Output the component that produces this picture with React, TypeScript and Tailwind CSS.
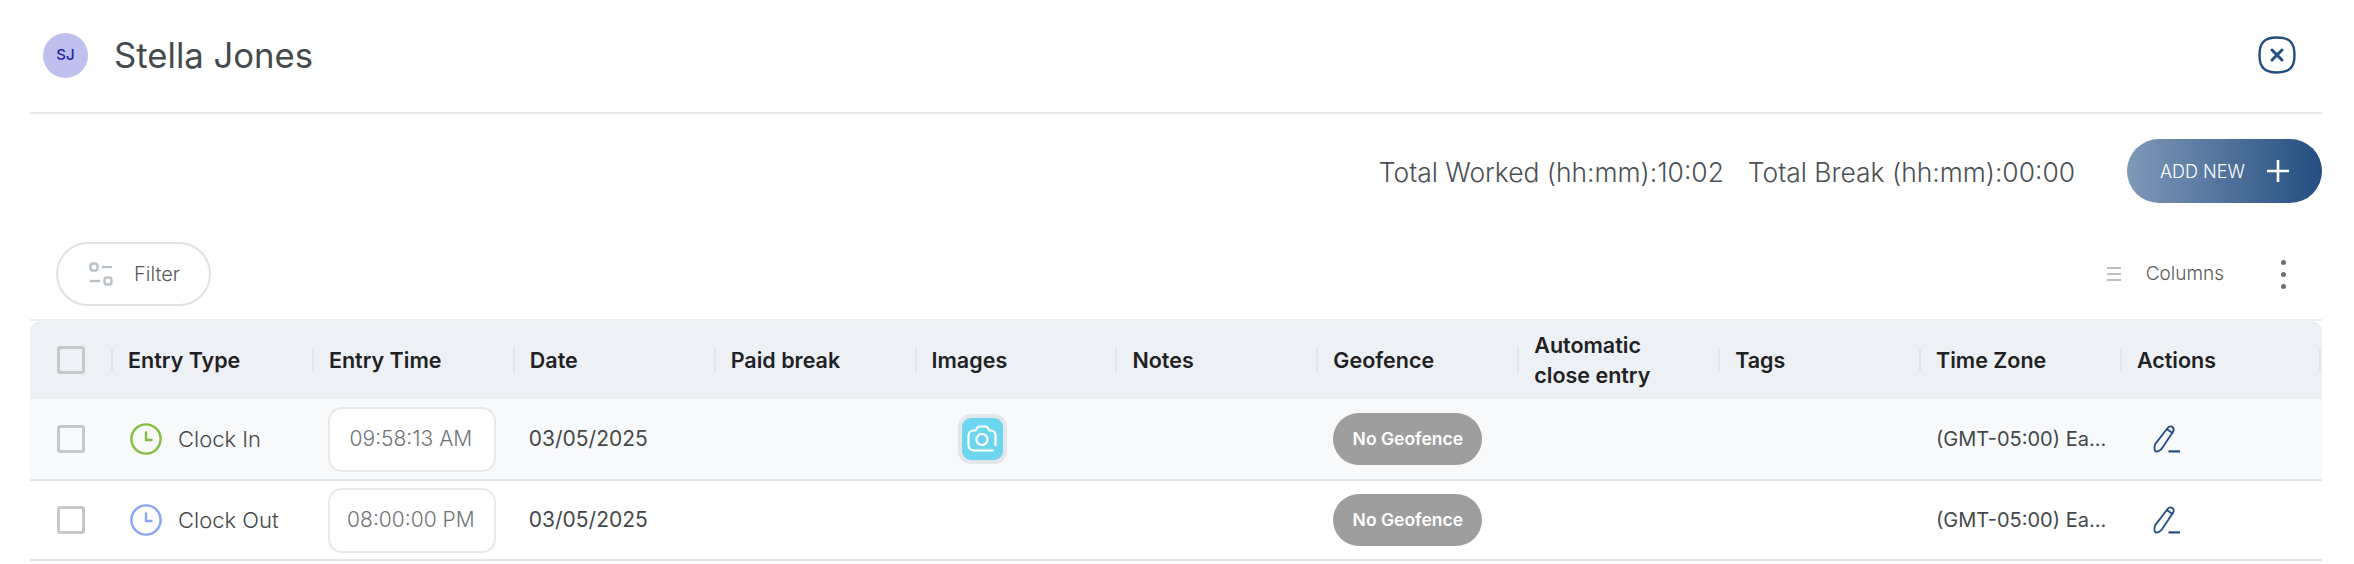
const columns = ["Entry Type", "Entry Time", "Date", "Paid break", "Images", "Notes", "Geofence", "Automatic close entry", "Tags", "Time Zone", "Actions"];

const rows = [
  { type: "Clock In", color: "#82bf3f", time: "09:58:13 AM", hasImage: true, bg: "bg-[#f8f9fb]", height: "h-[82px]" },
  { type: "Clock Out", color: "#8ba4f9", time: "08:00:00 PM", hasImage: false, bg: "bg-white", height: "h-[80px]" },
];

function Checkbox() {
  return <div className="h-[28px] w-[28px] rounded-[3px] border-[3px] border-[#c5c8cb]" />;
}

function ClockIcon({ color }: { color: string }) {
  return (
    <svg width="32" height="32" viewBox="0 0 32 32" fill="none" stroke={color} strokeWidth="2.4" strokeLinecap="round" strokeLinejoin="round">
      <circle cx="16" cy="16" r="14.6" />
      <path d="M16 9.5V17H21.5" />
    </svg>
  );
}

function EditIcon() {
  return (
    <svg width="28" height="28" viewBox="0 0 28 28" fill="none" stroke="#234e82" strokeWidth="1.8" strokeLinecap="round" strokeLinejoin="round">
      <path d="M14.8 2.8C16 1 18.6 1 19.8 2.3C21 3.6 20.8 5.6 19.8 7L9.2 23C8 25 4.6 27 2.4 26.4C0.8 24.6 1.4 20.5 2.6 18.6Z" />
      <path d="M14 4.2L19.6 8" />
      <path d="M15.5 26.4H27" strokeWidth="2.2" strokeLinecap="butt" />
    </svg>
  );
}

export default function App() {
  return (
    <div className="h-[564px] w-[2354px] overflow-hidden bg-white pl-[30px] pr-[32px] font-['Inter',sans-serif]">
      {/* title */}
      <div className="flex h-[114px] items-center justify-between border-b-2 border-[#e6e7e9] pb-[2px] pl-[13px] pr-[26px]">
        <div className="flex items-center gap-[26px]">
          <div className="flex h-[45px] w-[45px] items-center justify-center rounded-full bg-[#bfc0ee] text-[15px] font-medium text-[#1e22aa]">SJ</div>
          <span className="text-[34.7px] leading-none text-[#444a4e]">Stella Jones</span>
        </div>
        <svg width="38" height="38" viewBox="0 0 38 38" fill="none" stroke="#234e82">
          <path d="M19 1.5C31.5 1.5 36.5 6.5 36.5 19C36.5 31.5 31.5 36.5 19 36.5C6.5 36.5 1.5 31.5 1.5 19C1.5 6.5 6.5 1.5 19 1.5Z" strokeWidth="2.4" />
          <path d="M14 14L24 24M24 14L14 24" strokeWidth="3" strokeLinecap="round" />
        </svg>
      </div>

      {/* totals */}
      <div className="flex h-[128px] items-start justify-end pt-[25px]">
        <div className="flex h-[67px] items-center gap-[24px] text-[26.4px] font-light text-[#4a4f53]">
          <span>Total Worked (hh:mm):10:02</span>
          <span>Total Break (hh:mm):00:00</span>
        </div>
        <button className="ml-[52px] flex h-[64px] w-[195px] items-center rounded-full bg-gradient-to-r from-[#7f99b8] to-[#234e80] pl-[33px] text-[18px] font-light text-white">
          ADD NEW
          <svg className="ml-[22px]" width="22" height="22" viewBox="0 0 22 22" stroke="white" strokeWidth="2.6">
            <path d="M11 0V22M0 11H22" />
          </svg>
        </button>
      </div>

      {/* toolbar */}
      <div className="flex h-[79px] items-start justify-between border-b-2 border-[#eceef0] pl-[26px] pr-[36px]">
        <button className="flex h-[64px] w-[155px] items-center rounded-full border-2 border-[#dfe1e3] pl-[31px] text-[20px] font-light text-[#55595c]">
          <svg width="24" height="24" viewBox="0 0 24 24" fill="none" stroke="#b9c1c7" strokeWidth="2.4">
            <rect x="1.5" y="1.5" width="7" height="7" rx="2.5" />
            <path d="M13 5H23" />
            <path d="M1 19H11" />
            <rect x="15.5" y="15.5" width="7" height="7" rx="2.5" />
          </svg>
          <span className="ml-[21px]">Filter</span>
        </button>
        <div className="flex h-[64px] items-center">
          <svg width="14" height="16" viewBox="0 0 14 16" stroke="#b9c1c7" strokeWidth="2">
            <path d="M0 2H14M0 8H14M0 14H14" />
          </svg>
          <span className="ml-[25px] text-[19px] font-light text-[#55595c]">Columns</span>
          <div className="ml-[57px] flex flex-col gap-[7px]">
            <div className="h-[5px] w-[5px] rounded-full bg-[#6b6e71]" />
            <div className="h-[5px] w-[5px] rounded-full bg-[#6b6e71]" />
            <div className="h-[5px] w-[5px] rounded-full bg-[#6b6e71]" />
          </div>
        </div>
      </div>

      {/* table */}
      <div className="grid h-[78px] grid-cols-[81px_repeat(10,200.9px)_1fr] items-center rounded-t-[10px] bg-[#edf0f4] text-[21.5px] font-semibold leading-[30px] text-[#1f2225]">
        <div className="pl-[27px]"><Checkbox /></div>
        {columns.map((c) => (
          <div key={c} className="relative pl-[17px] pr-[50px]">
            <div className="absolute left-0 top-1/2 h-[24px] w-[2px] -translate-y-1/2 bg-[#e2e5e9]" />
            {c === "Actions" && <div className="absolute right-[1px] top-1/2 h-[24px] w-[2px] -translate-y-1/2 bg-[#e2e5e9]" />}
            {c}
          </div>
        ))}
      </div>
      {rows.map((r) => (
        <div key={r.type} className={`grid grid-cols-[81px_repeat(10,200.9px)_1fr] items-center border-b-2 border-[#e3e5e8] text-[21px] text-[#44484b] ${r.height} ${r.bg}`}>
          <div className="pl-[27px]"><Checkbox /></div>
          <div className="flex items-center gap-[16px] pl-[19px] text-[22px] font-light">
            <ClockIcon color={r.color} />
            {r.type}
          </div>
          <div className="pl-[16px]">
            <div className="flex h-[65px] w-[168px] items-center justify-center rounded-[14px] border-2 border-[#e7e9eb] bg-white pr-[2px] text-[21px] font-light text-[#6f7477]">{r.time}</div>
          </div>
          <div className="pl-[16px]">03/05/2025</div>
          <div />
          <div className="pl-[43px]">
            {r.hasImage && (
              <div className="flex h-[50px] w-[49px] items-center justify-center rounded-[13px] border-[4px] border-[#e3e6ea] bg-[#6dd5ee]">
                <svg width="30" height="28" viewBox="0 0 30 28" fill="none" stroke="white" strokeWidth="2.2" strokeLinecap="round" strokeLinejoin="round">
                  <path d="M26 25.5H7C3.5 25.5 1.5 23.5 1.5 20V11C1.5 7.5 3.5 5.5 7 5.5H8.5L10.5 2.5C11 1.8 11.5 1.5 12.5 1.5H18.5C19.5 1.5 20 1.8 20.5 2.5L22.5 5.5H23.5C26.8 5.5 28.5 7.5 28.5 11V20" />
                  <circle cx="15" cy="14.5" r="5.5" />
                </svg>
              </div>
            )}
          </div>
          <div />
          <div className="pl-[17px]">
            <div className="flex h-[52px] w-[149px] items-center justify-center rounded-full bg-[#9e9e9e] text-[17.5px] font-semibold text-white">No Geofence</div>
          </div>
          <div />
          <div />
          <div className="whitespace-nowrap pl-[17px] text-[20px] font-normal">(GMT-05:00) Ea...</div>
          <div className="pl-[33px]"><EditIcon /></div>
        </div>
      ))}
    </div>
  );
}
